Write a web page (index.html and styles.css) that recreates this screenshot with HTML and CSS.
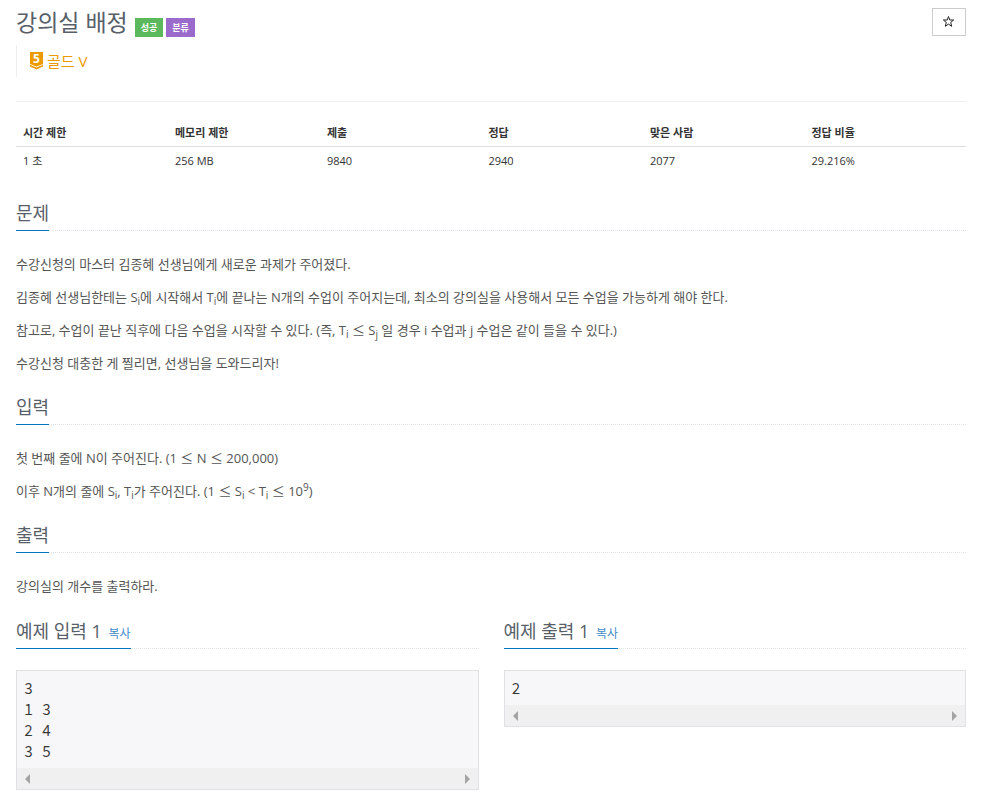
FILE: index.html
```html
<!DOCTYPE html>
<html lang="ko">
<head>
  <meta charset="utf-8">
  <title>강의실 배정</title>
  <link rel="stylesheet" href="styles.css">
</head>
<body>
  <div class="page-header">
    <div class="title-row">
      <h1>강의실 배정</h1>
      <span class="label label-success">성공</span>
      <span class="label label-purple">분류</span>
    </div>
    <button class="bookmark" type="button" aria-label="즐겨찾기">
      <svg width="12" height="12" viewBox="0 0 12 12"><path d="M5.5 0.5 L6.8 4 H10.6 L7.7 6.4 L8.7 10.3 L5.5 8.1 L2.3 10.3 L3.3 6.4 L0.4 4 H4.2 Z" fill="none" stroke="#222"/></svg>
    </button>
  </div>

  <div class="tier">
    <svg class="tier-badge" width="13" height="18" viewBox="0 0 13 18">
      <path d="M0 0 H13 V12 L6.5 14.6 L0 12 Z M0 12.8 L6.5 15.4 L13 12.8 V14.6 L6.5 17.4 L0 14.6 Z" fill="#ec9a00"/>
      <text x="6.5" y="11" class="tier-number">5</text>
    </svg>
    <a href="#">골드 V</a>
  </div>

  <hr>

  <table class="info">
    <thead>
      <tr>
        <th class="limit">시간 제한</th>
        <th class="limit">메모리 제한</th>
        <th>제출</th>
        <th>정답</th>
        <th>맞은 사람</th>
        <th>정답 비율</th>
      </tr>
    </thead>
    <tbody>
      <tr>
        <td>1 초</td>
        <td>256 MB</td>
        <td>9840</td>
        <td>2940</td>
        <td>2077</td>
        <td>29.216%</td>
      </tr>
    </tbody>
  </table>

  <section>
    <div class="headline"><h2>문제</h2></div>
    <p>수강신청의 마스터 김종혜 선생님에게 새로운 과제가 주어졌다.</p>
    <p>김종혜 선생님한테는 S<sub>i</sub>에 시작해서 T<sub>i</sub>에 끝나는 N개의 수업이 주어지는데, 최소의 강의실을 사용해서 모든 수업을 가능하게 해야 한다.</p>
    <p>참고로, 수업이 끝난 직후에 다음 수업을 시작할 수 있다. (즉, T<sub>i</sub> <span class="op">≤</span> S<sub>j</sub> 일 경우 i 수업과 j 수업은 같이 들을 수 있다.)</p>
    <p>수강신청 대충한 게 찔리면, 선생님을 도와드리자!</p>
  </section>

  <section>
    <div class="headline"><h2>입력</h2></div>
    <p>첫 번째 줄에 N이 주어진다. (1 <span class="op">≤</span> N <span class="op">≤</span> 200,000)</p>
    <p>이후 N개의 줄에 S<sub>i</sub>, T<sub>i</sub>가 주어진다. (1 <span class="op">≤</span> S<sub>i</sub> &lt; T<sub>i</sub> <span class="op">≤</span> 10<sup>9</sup>)</p>
  </section>

  <section>
    <div class="headline"><h2>출력</h2></div>
    <p>강의실의 개수를 출력하라.</p>
  </section>

  <div class="samples">
    <section>
      <div class="headline"><h2>예제 입력 1 <button class="copy" type="button">복사</button></h2></div>
      <div class="sampledata">
<pre>3
1 3
2 4
3 5</pre>
        <div class="scrollbar"><span class="arrow-left"></span><span class="arrow-right"></span></div>
      </div>
    </section>
    <section>
      <div class="headline"><h2>예제 출력 1 <button class="copy" type="button">복사</button></h2></div>
      <div class="sampledata">
<pre>2</pre>
        <div class="scrollbar"><span class="arrow-left"></span><span class="arrow-right"></span></div>
      </div>
    </section>
  </div>
</body>
</html>
```

FILE: styles.css
```css
* {
  box-sizing: border-box;
}

body {
  margin: 0;
  padding: 8px 16px;
  background: #fff;
  color: #555;
  font-family: "Open Sans", "Noto Sans CJK KR", sans-serif;
  font-size: 13px;
  line-height: 23px;
}

.page-header {
  display: flex;
  justify-content: space-between;
  align-items: flex-start;
  height: 37px;
}

.title-row {
  display: flex;
  align-items: flex-end;
  gap: 3px;
}

h1 {
  margin: 0 4px 0 0;
  color: #585f69;
  font-size: 23px;
  font-weight: 400;
  line-height: 29px;
}

.label {
  padding: 0 6px;
  color: #fff;
  font-size: 9px;
  font-weight: 700;
  line-height: 19px;
}

.label-success {
  background: #5cb85c;
}

.label-purple {
  background: #9b6bcc;
}

.bookmark {
  display: flex;
  align-items: center;
  justify-content: center;
  width: 34px;
  height: 28px;
  padding: 0;
  border: 1px solid #ccc;
  background: #fff;
  cursor: pointer;
}

.tier {
  display: flex;
  align-items: center;
  gap: 4px;
  height: 32px;
  padding-left: 13px;
  border-left: 1px solid #eee;
  font-size: 15px;
}

.tier a {
  color: #ec9a00;
  text-decoration: none;
}

.tier-badge {
  overflow: visible;
}

.tier-number {
  fill: #fff;
  font-size: 12px;
  font-weight: 700;
  text-anchor: middle;
}

hr {
  margin: 24px 0 17px;
  border: 0;
  border-top: 1px solid #eee;
}

.info {
  width: 100%;
  margin-bottom: 25px;
  border-collapse: collapse;
  table-layout: fixed;
  color: #333;
  font-size: 11px;
  line-height: 20px;
}

.info th,
.info td {
  padding: 4px 7px;
  text-align: left;
}

.info th {
  width: 17%;
  padding-bottom: 3px;
  border-bottom: 1px solid #ddd;
}

.info .limit {
  width: 16%;
}

.headline {
  display: flex;
  margin: 19px 0 22px;
  border-bottom: 1px dotted #dde1e8;
}

h2 {
  margin: 0 0 -1px;
  padding-bottom: 3px;
  border-bottom: 1px solid #0076c0;
  color: #585f69;
  font-size: 18px;
  font-weight: 400;
  line-height: 27px;
}

p {
  margin: 0 0 10px;
}

.op {
  font-family: "Noto Sans CJK KR", sans-serif;
  line-height: 1;
}

sub,
sup {
  position: relative;
  font-size: 10px;
  line-height: 0;
  vertical-align: baseline;
}

sub {
  bottom: -3px;
}

sup {
  top: -5px;
}

.samples {
  display: grid;
  grid-template-columns: 1fr 1fr;
  align-items: start;
  gap: 25px;
}

.samples .headline {
  margin: 10px 0 21px;
}

.copy {
  margin-left: 2px;
  padding: 0;
  border: 0;
  background: none;
  color: #428bca;
  font-family: inherit;
  font-size: 12px;
  line-height: 1;
  cursor: pointer;
}

.sampledata {
  border: 1px solid #e0e0e5;
  background: #f7f7f9;
}

pre {
  margin: 0;
  padding: 7px 7px 6px;
  color: #333;
  font-family: "Source Code Pro", "DejaVu Sans Mono", monospace;
  font-size: 15px;
  line-height: 21px;
}

.scrollbar {
  display: flex;
  align-items: center;
  justify-content: space-between;
  height: 21px;
  padding: 0 8px;
  background: #f0f0f0;
}

.arrow-left,
.arrow-right {
  border: 5px solid transparent;
}

.arrow-left {
  border-left: 0;
  border-right-color: #a3a3a3;
}

.arrow-right {
  border-right: 0;
  border-left-color: #a3a3a3;
}
```
